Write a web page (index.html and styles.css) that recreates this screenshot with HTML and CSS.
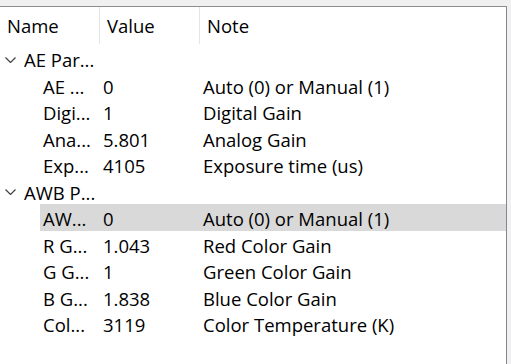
FILE: index.html
```html
<!doctype html>
<html lang="en">
<head>
    <meta charset="UTF-8">
    <title>Parameters</title>
    <link rel="stylesheet" href="styles.css">
</head>
<body>
<div class="tree">
    <div class="header">
        <div class="hcell">Name</div>
        <div class="hcell">Value</div>
        <div class="hcell">Note</div>
    </div>
    <div class="rows">
        <div class="row group">
            <div class="cell name"><svg class="arrow" width="11" height="6" viewBox="0 0 11 6"><path d="M0.5 0.5 L5.5 5.5 L10.5 0.5" fill="none" stroke="#404040" stroke-width="1.2"/></svg>AE Par...</div>
            <div class="cell"></div>
            <div class="cell"></div>
        </div>
        <div class="row">
            <div class="cell name child">AE ...</div>
            <div class="cell value">0</div>
            <div class="cell note">Auto (0) or Manual (1)</div>
        </div>
        <div class="row">
            <div class="cell name child">Digi...</div>
            <div class="cell value">1</div>
            <div class="cell note">Digital Gain</div>
        </div>
        <div class="row">
            <div class="cell name child">Ana...</div>
            <div class="cell value">5.801</div>
            <div class="cell note">Analog Gain</div>
        </div>
        <div class="row">
            <div class="cell name child">Exp...</div>
            <div class="cell value">4105</div>
            <div class="cell note">Exposure time (us)</div>
        </div>
        <div class="row group">
            <div class="cell name"><svg class="arrow" width="11" height="6" viewBox="0 0 11 6"><path d="M0.5 0.5 L5.5 5.5 L10.5 0.5" fill="none" stroke="#404040" stroke-width="1.2"/></svg>AWB P...</div>
            <div class="cell"></div>
            <div class="cell"></div>
        </div>
        <div class="row selected">
            <div class="cell name child">AW...</div>
            <div class="cell value">0</div>
            <div class="cell note">Auto (0) or Manual (1)</div>
        </div>
        <div class="row">
            <div class="cell name child">R G...</div>
            <div class="cell value">1.043</div>
            <div class="cell note">Red Color Gain</div>
        </div>
        <div class="row">
            <div class="cell name child">G G...</div>
            <div class="cell value">1</div>
            <div class="cell note">Green Color Gain</div>
        </div>
        <div class="row">
            <div class="cell name child">B G...</div>
            <div class="cell value">1.838</div>
            <div class="cell note">Blue Color Gain</div>
        </div>
        <div class="row">
            <div class="cell name child">Col...</div>
            <div class="cell value">3119</div>
            <div class="cell note">Color Temperature (K)</div>
        </div>
    </div>
</div>
</body>
</html>
```

FILE: styles.css
```css
*
{
    box-sizing: border-box;
}

body
{
    margin: 0;
    height: 364px;
    background-color: #f0f0f0;
    font-family: "Open Sans", sans-serif;
    font-size: 18.5px;
    color: #000;
    overflow: hidden;
}

.tree
{
    margin-top: 6px;
    width: 507px;
    height: 358px;
    background-color: #fff;
    border-top: 1px solid #8c8c8c;
    border-right: 1px solid #828790;
}

.header
{
    display: grid;
    grid-template-columns: 99px 100px 1fr;
    height: 38px;
}

.hcell
{
    display: flex;
    align-items: center;
    padding-left: 7px;
    height: 37px;
}

.hcell + .hcell
{
    border-left: 1px solid #e5e5e5;
}

.row
{
    display: grid;
    grid-template-columns: 99px 100px 1fr;
    height: 26.5px;
    white-space: nowrap;
    line-height: 23px;
}

.cell
{
    overflow: hidden;
    padding-top: 3px;
}

.name
{
    display: flex;
    align-items: center;
    padding-left: 5px;
}

.name.child
{
    padding-left: 43px;
}

.value
{
    padding-left: 4px;
}

.note
{
    padding-left: 4px;
}

.selected
{
    background: linear-gradient(to right, #fff 40px, #d9d9d9 40px);
}

.arrow
{
    display: block;
    margin: 0 8px 0 0;
}
```
